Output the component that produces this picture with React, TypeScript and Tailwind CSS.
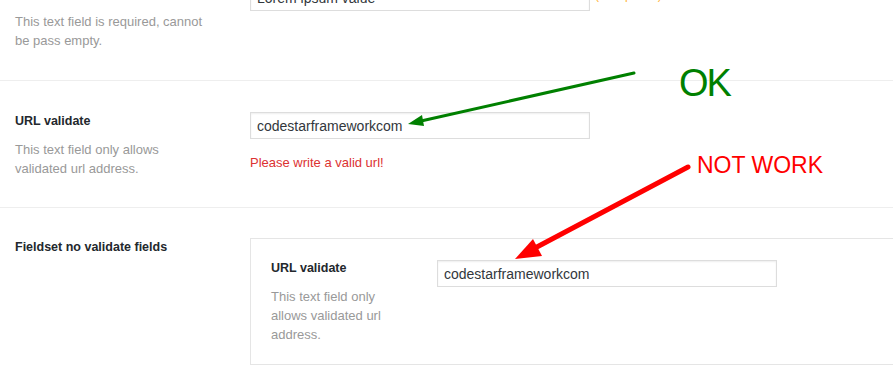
import React from 'react'

function Campo({ valor }: { valor: string }) {
  return (
    <input
      className="w-[340px] h-[27px] border border-[#ddd] bg-white px-[6px] text-[14px] text-[#32373c] shadow-[inset_0_1px_2px_rgba(0,0,0,0.07)] outline-none"
      type="text"
      value={valor}
      readOnly
    />
  )
}

function Titulo({ children }: { children: React.ReactNode }) {
  return <h4 className="text-[12.5px] font-semibold text-[#23282d] leading-[19px]">{children}</h4>
}

function Descricao({ children, largura }: { children: React.ReactNode, largura: string }) {
  return <p className={`mt-[9px] text-[13px] leading-[19px] text-[#999] ${largura}`}>{children}</p>
}

export default function App() {
  return (
    <div className="relative w-[893px] h-[383px] overflow-hidden bg-white font-['Liberation_Sans',Arial,sans-serif]">
      <div className="w-[1000px] -mt-[47px]">
        {/* campo obrigatorio */}
        <div className="flex border-b border-[#eee] pl-[15px] pt-[31px] pb-[30px]">
          <div className="w-[235px] shrink-0">
            <Titulo>Required field</Titulo>
            <Descricao largura="w-[195px]">This text field is required, cannot be pass empty.</Descricao>
          </div>
          <div className="flex items-start">
            <Campo valor="Lorem ipsum value" />
            <span className="ml-[5px] mt-[2px] text-[12px] leading-[19px] text-[#ffb236]">( * required )</span>
          </div>
        </div>

        {/* url validate */}
        <div className="flex border-b border-[#eee] pl-[15px] pt-[31px] pb-[29px]">
          <div className="w-[235px] shrink-0">
            <Titulo>URL validate</Titulo>
            <Descricao largura="w-[195px]">This text field only allows validated url address.</Descricao>
          </div>
          <div className="flex flex-col items-start">
            <Campo valor="codestarframeworkcom" />
            <span className="mt-[14px] text-[13px] leading-[19px] text-[#dc3232]">Please write a valid url!</span>
          </div>
        </div>

        {/* fieldset */}
        <div className="flex pl-[15px] pt-[30px]">
          <div className="w-[235px] shrink-0">
            <Titulo>Fieldset no validate fields</Titulo>
          </div>
          <div className="flex-1 border border-[#e5e5e5] p-[20px]">
            <div className="flex">
              <div className="w-[166px] shrink-0">
                <Titulo>URL validate</Titulo>
                <Descricao largura="w-[125px]">This text field only allows validated url address.</Descricao>
              </div>
              <div className="mt-px">
                <Campo valor="codestarframeworkcom" />
              </div>
            </div>
          </div>
        </div>
      </div>

      {/* anotacoes */}
      <svg className="absolute inset-0 pointer-events-none" width="893" height="383">
        <line x1="634" y1="73" x2="421" y2="121" stroke="#008000" strokeWidth="3" strokeLinecap="round" />
        <polygon points="408,124 424,126 422,115" fill="#008000" />
        <line x1="688" y1="167" x2="535" y2="248" stroke="#ff0000" strokeWidth="5" strokeLinecap="round" />
        <polygon points="515,259 542,256 533,239" fill="#ff0000" />
      </svg>
      <span className="absolute left-[679px] top-[64px] text-[38px] leading-none tracking-[-2px] text-[#008000]">OK</span>
      <span className="absolute left-[697px] top-[154px] text-[23px] leading-none text-[#ff0000]">NOT WORK</span>
    </div>
  )
}
